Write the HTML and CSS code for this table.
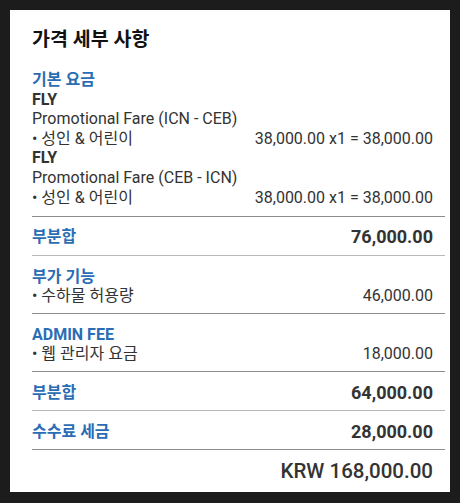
FILE: index.html
```html
<!DOCTYPE html>
<html lang="ko">
<head>
<meta charset="utf-8">
<link rel="stylesheet" href="styles.css">
</head>
<body>
<div class="panel">
  <div class="title">가격 세부 사항</div>

  <div class="section first">
    <div class="head">기본 요금</div>
    <div class="line strong">FLY</div>
    <div class="line">Promotional Fare (ICN - CEB)</div>
    <div class="row"><span>• 성인 &amp; 어린이</span><span class="val">38,000.00 x1 = 38,000.00</span></div>
    <div class="line strong">FLY</div>
    <div class="line">Promotional Fare (CEB - ICN)</div>
    <div class="row"><span>• 성인 &amp; 어린이</span><span class="val">38,000.00 x1 = 38,000.00</span></div>
  </div>

  <div class="total light">
    <span class="head">부분합</span><span class="amount">76,000.00</span>
  </div>

  <div class="section">
    <div class="head">부가 기능</div>
    <div class="row"><span>• 수하물 허용량</span><span class="val">46,000.00</span></div>
  </div>

  <div class="section">
    <div class="head">ADMIN FEE</div>
    <div class="row"><span>• 웹 관리자 요금</span><span class="val">18,000.00</span></div>
  </div>

  <div class="total light">
    <span class="head">부분합</span><span class="amount">64,000.00</span>
  </div>

  <div class="total">
    <span class="head">수수료 세금</span><span class="amount">28,000.00</span>
  </div>

  <div class="grand">
    <span class="amount">KRW 168,000.00</span>
  </div>
</div>
</body>
</html>
```

FILE: styles.css
```css
html, body {
  margin: 0;
  padding: 0;
  background: #1c1c1c;
}
body {
  font-family: Roboto, "Noto Sans CJK KR", sans-serif;
  color: #333;
}
.panel {
  margin: 10px;
  width: 440px;
  height: 482px;
  box-sizing: border-box;
  background: #fff;
  padding: 17px 5px 0 22px;
}
.title {
  font-size: 19.5px;
  font-weight: 700;
  line-height: 26px;
  color: #111;
  margin-bottom: 6px;
}
.section {
  padding: 11px 0 7px;
  border-bottom: 1px solid #8c8c8c;
  font-size: 16px;
  line-height: 19.6px;
}
.section.first {
  padding-bottom: 8.5px;
}
.head {
  color: #2a6db4;
  font-weight: 700;
  font-size: 16px;
}
.line.strong {
  font-weight: 700;
  color: #333;
}
.row {
  display: flex;
  justify-content: space-between;
  padding-right: 12px;
}
.total {
  display: flex;
  justify-content: space-between;
  align-items: center;
  padding: 10.5px 12px 7.5px 0;
  line-height: 20px;
  border-bottom: 1px solid #8c8c8c;
}
.total.light {
  border-bottom-color: #b8b8b8;
}
.amount {
  font-size: 18px;
  font-weight: 700;
  color: #333;
}
.grand {
  display: flex;
  justify-content: flex-end;
  padding: 9px 12px 0 0;
  line-height: 24px;
}
.grand .amount {
  font-size: 20.5px;
  font-weight: 500;
}
```
